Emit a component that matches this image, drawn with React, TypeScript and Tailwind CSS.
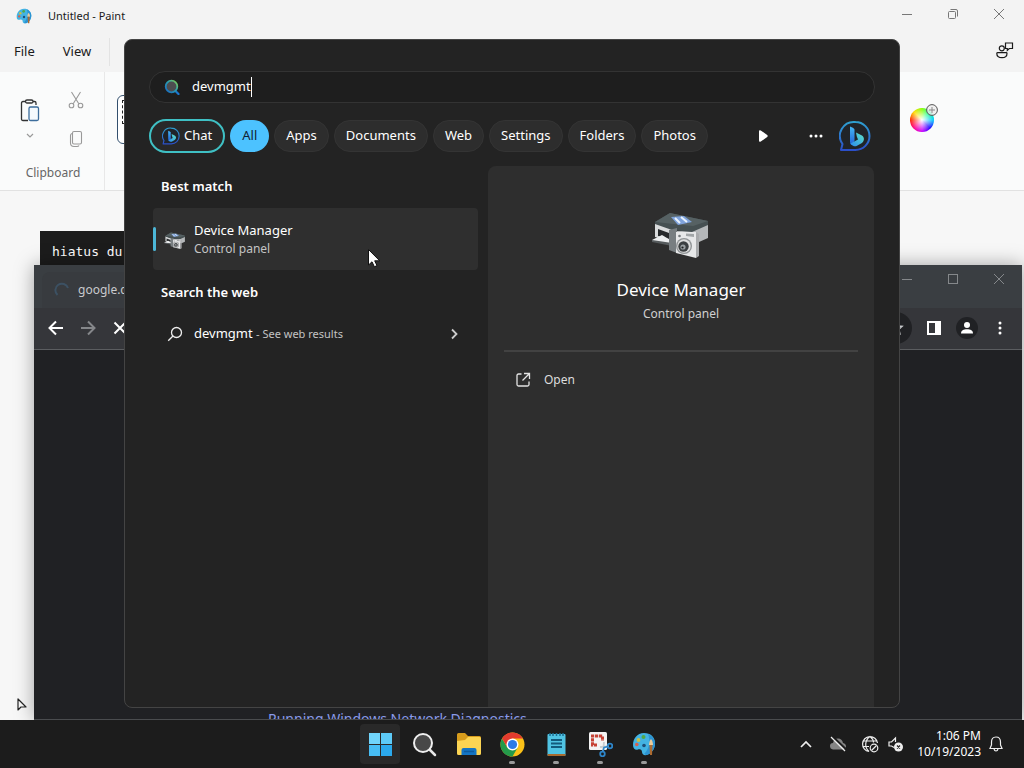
import { useState } from 'react';
import type { ReactNode } from 'react';

const FILTERS = ['Apps', 'Documents', 'Web', 'Settings', 'Folders', 'Photos'];

export default function App() {
  return (
    <div className="flex h-screen flex-col overflow-hidden bg-[#1c1c1c] font-['Noto_Sans',sans-serif]">
      <main className="relative min-h-0 flex-1 overflow-hidden">
        <PaintWindow />
        <div className="absolute top-[231px] left-10 h-10 w-96 bg-[#1c1c1c] px-3 pt-3 font-['DejaVu_Sans_Mono',monospace] text-[13px] leading-[18px] text-white">
          hiatus du
        </div>
        <BrowserWindow />
        <SearchPanel />
        <svg className="absolute top-[697px] left-4 h-4 w-3" viewBox="0 0 12 16" aria-hidden="true">
          <path d="M2 2v11l3-3h5z" fill="#f4f4f4" stroke="#222" strokeWidth="1.2" strokeLinejoin="round" />
        </svg>
        <svg className="absolute top-[248px] left-[367px] h-5 w-4" viewBox="0 0 16 20" aria-hidden="true">
          <path d="M1.500 1.500v15.500l3.500-3.200 2.400 5 2.600-1.200-2.300-4.800h5z" fill="#fff" stroke="#111" />
        </svg>
      </main>
      <Taskbar />
    </div>
  );
}

/* ── Paint ─────────────────────────────── */

function PaintWindow() {
  return (
    <section className="absolute inset-0 flex flex-col bg-[#f7f7f7] text-[#1a1a1a]">
      <header className="flex h-8 shrink-0 items-center bg-[#f3f3f3] pr-4 pl-4">
        <PaletteIcon className="h-4 w-4" />
        <h1 className="ml-4 text-[11px]">Untitled - Paint</h1>
        <div className="-mt-1 ml-auto flex items-center gap-7 text-[#777]">
          <WindowButton label="Minimize"><path d="M3 8.500h10" /></WindowButton>
          <WindowButton label="Restore">
            <rect x="3.500" y="5.500" width="7" height="7" rx="1" />
            <path d="M5.500 3.500H11q1.500 0 1.500 1.500v5.500" />
          </WindowButton>
          <WindowButton label="Close"><path d="M3 3l10 10M13 3L3 13" /></WindowButton>
        </div>
      </header>
      <nav className="flex h-10 shrink-0 items-center bg-[#f3f3f3] px-3 text-[13px]">
        <button type="button" className="px-0.5">File</button>
        <button type="button" className="ml-6 px-0.5">View</button>
        <span className="ml-4 h-7 w-px bg-[#e3e3e3]" />
        <button type="button" aria-label="Feedback" className="-mt-1 -mr-0.5 ml-auto">
          <svg className="h-[18px] w-[18px]" viewBox="0 0 18 18" fill="none" stroke="#1a1a1a" strokeWidth="1.200">
            <circle cx="5.800" cy="7.300" r="2.500" />
            <path d="M1.800 11.600h8.400q.8 0 .8.800c0 3-2 4.200-5 4.200s-5.200-1.200-5.200-4.200q0-.8 1-.8zM9.500 2h7v5.500h-3.200l-2 1.800V7.500H9.500z" />
          </svg>
        </button>
      </nav>
      <div className="flex h-[119px] shrink-0 border-b border-[#e2e2e2] bg-[#fafbfb]">
        <div className="flex w-[105px] flex-col items-center border-r border-[#e8e8e8] pt-4">
          <div className="flex h-[66px] gap-7">
            <button type="button" aria-label="Paste" className="flex flex-col items-center pt-2.5">
              <svg className="h-6 w-5" viewBox="0 0 20 24" fill="none" strokeWidth="1.300">
                <path d="M8 22.500H3Q1.500 22.500 1.500 21V5q0-1.500 1.500-1.500h2.500M13 3.500h1.500Q16 3.500 16 5v2" stroke="#333" />
                <rect x="5.500" y="2" width="7.500" height="3" rx="1.500" stroke="#333" />
                <rect x="9" y="9" width="9.500" height="13.500" rx="1.500" stroke="#3d6d9c" fill="#f4f9fd" />
              </svg>
              <svg className="mt-2.5 h-2 w-2" viewBox="0 0 8 8" fill="none" stroke="#999" strokeWidth="1.200"><path d="M1 2l3 3 3-3" /></svg>
            </button>
            <div className="flex flex-col items-center gap-5 pt-0.5">
              <button type="button" aria-label="Cut">
                <svg className="block h-5 w-4" viewBox="0 0 16 18" fill="none" stroke="#999" strokeWidth="1.100">
                  <path d="M3.500 1l7.300 11.800M12.500 1L5.200 12.800" />
                  <circle cx="3.500" cy="14.500" r="2.300" />
                  <circle cx="12.500" cy="14.500" r="2.300" />
                </svg>
              </button>
              <button type="button" aria-label="Copy">
                <svg className="block h-[18px] w-4" viewBox="0 0 16 18" fill="none" stroke="#999" strokeWidth="1.100">
                  <rect x="4.500" y="1.500" width="9" height="12.500" rx="1.500" />
                  <path d="M4 3.500Q2.500 4 2.500 5.500V13q0 3.500 3.500 3.500h3q1.500 0 2-1" />
                </svg>
              </button>
            </div>
          </div>
          <span className="mt-2.5 ml-0.5 text-[12px] text-[#666]">Clipboard</span>
        </div>
        <button type="button" aria-label="Select" className="mt-[23px] ml-3 flex h-[49px] w-12 items-start rounded-md border border-[#33506e] bg-white p-1">
          <span className="h-6 w-full border border-dashed border-[#222]" />
        </button>
        <button type="button" aria-label="Edit colors" className="mt-8 mr-[86px] ml-auto h-7 w-7">
          <span className="relative block h-7 w-7">
            <span className="absolute bottom-0 left-0 h-6 w-6 rounded-full bg-[radial-gradient(circle,white,transparent_70%),conic-gradient(#8f0,#0f8,#0cf,#20f,#c0f,#f08,#f20,#fd0,#8f0)]" />
            <svg className="absolute top-0 right-0 h-3 w-3" viewBox="0 0 12 12" fill="none" stroke="#555">
              <circle cx="6" cy="6" r="5.400" fill="#eee" fillOpacity=".8" />
              <path d="M6 3v6M3 6h6" stroke="#888" />
            </svg>
          </span>
        </button>
      </div>
    </section>
  );
}

function WindowButton({ label, children }: { label: string; children: ReactNode }) {
  return (
    <button type="button" aria-label={label} className="px-0.5">
      <svg className="block h-4 w-[14px]" viewBox="1 0 14 16" fill="none" stroke="currentColor">
        {children}
      </svg>
    </button>
  );
}

/* ── Browser ─────────────────────────────── */

function BrowserWindow() {
  return (
    <section className="absolute top-[265px] right-0.5 bottom-0 left-[34px] flex flex-col overflow-hidden bg-[#202124] shadow-[0_0_18px_rgba(0,0,0,0.35)]">
      <div className="flex h-[43px] shrink-0 items-end bg-[#3a3e42] pr-3.5 pl-2">
        <div className="flex h-9 w-60 items-center rounded-t-lg bg-[#383b3f] pl-3 text-[12px] text-[#c8cacd]">
          <svg className="mr-2 h-4 w-4" viewBox="0 0 16 16" fill="none" stroke="#3c5163" strokeWidth="2">
            <path d="M3.500 13A6.500 6.500 0 1 1 14 6" />
          </svg>
          google.ca
        </div>
        <div className="mb-[21px] ml-auto flex gap-7 text-[#85888b]">
          <WindowButton label="Minimize browser"><path d="M3 8.500h10" /></WindowButton>
          <WindowButton label="Maximize browser"><rect x="3.500" y="3.500" width="9" height="9" /></WindowButton>
          <WindowButton label="Close browser"><path d="M3 3l10 10M13 3L3 13" /></WindowButton>
        </div>
      </div>
      <div className="flex h-[42px] shrink-0 items-center border-b border-[#5b5d60] bg-[#35363a] pr-3.5 pb-px pl-3">
        <div className="flex gap-3">
          <NavButton label="Back" className="text-white"><path d="M17 10H4M10 3.500L3.500 10l6.500 6.500" /></NavButton>
          <NavButton label="Forward" className="text-[#85878a]"><path d="M3 10h13M10 3.500l6.500 6.500-6.500 6.500" /></NavButton>
          <NavButton label="Stop" className="text-white"><path d="M4.500 4.500l11 11M15.500 4.500l-11 11" /></NavButton>
        </div>
        <div className="ml-6 flex h-8 flex-1 items-center justify-end rounded-full bg-[#202124] pr-2">
          <svg className="h-4 w-4" viewBox="0 0 16 16" fill="none" stroke="#c8cacd" strokeWidth="1.500"><path d="M8 2l1.800 4 4.200.4-3.200 2.800 1 4.300L8 11.200l-3.800 2.300 1-4.300L2 6.400 6.200 6z" /></svg>
        </div>
        <button type="button" aria-label="Side panel" className="ml-3.5">
          <svg className="block h-4 w-4" viewBox="0 0 16 16"><path fill="#fff" fillRule="evenodd" d="M1 1h14v14H1zM3 3v10h6V3z" /></svg>
        </button>
        <button type="button" aria-label="Profile" className="ml-3.5 flex h-[22px] w-[22px] items-center justify-center rounded-full bg-[#202124]">
          <svg className="h-3.5 w-3.5" viewBox="0 0 14 14" fill="#fff"><circle cx="7" cy="4" r="3" /><path d="M1 12.500c0-3 2.500-4.200 6-4.200s6 1.200 6 4.200z" /></svg>
        </button>
        <button type="button" aria-label="Browser menu" className="ml-3.5">
          <svg className="block h-4 w-4" viewBox="0 0 16 16" fill="#fff"><circle cx="8" cy="3" r="1.500" /><circle cx="8" cy="8" r="1.500" /><circle cx="8" cy="13" r="1.500" /></svg>
        </button>
      </div>
      <div className="flex min-h-0 flex-1 flex-col justify-end overflow-hidden border-b border-[#4a4c4f] pl-[234px]">
        <div className="h-2.5">
          <a href="#diagnostics" className="block text-[14px] leading-5 text-[#8a9bea]">Running Windows Network Diagnostics</a>
        </div>
      </div>
    </section>
  );
}

function NavButton({ label, className, children }: { label: string; className: string; children: ReactNode }) {
  return (
    <button type="button" aria-label={label} className={className}>
      <svg className="block h-5 w-5" viewBox="0 0 20 20" fill="none" stroke="currentColor" strokeWidth="2">
        {children}
      </svg>
    </button>
  );
}

/* ── Search panel ─────────────────────────────── */

function SearchPanel() {
  const [query, setQuery] = useState('devmgmt');

  return (
    <section className="absolute inset-x-[124px] top-[39px] bottom-3 flex flex-col rounded-lg border border-[#444] bg-[#232323] pt-[31px] text-white">
      <label className="mx-6 flex h-8 shrink-0 items-center rounded-full border border-[#333] bg-[#1e1e1e] pl-3.5">
        <svg className="mr-3 h-4 w-4" viewBox="0 0 16 16" fill="none" aria-hidden="true">
          <defs>
            <linearGradient id="lens" x1="1" y1="0" x2="0" y2="1">
              <stop offset="0" stopColor="#8bcf4a" />
              <stop offset=".45" stopColor="#2a9fb0" />
              <stop offset="1" stopColor="#1668c4" />
            </linearGradient>
          </defs>
          <path d="M11.500 12l3 3" stroke="#1b78cf" strokeWidth="2.200" strokeLinecap="round" />
          <circle cx="7.500" cy="7.500" r="5.800" fill="#4d4d50" stroke="url(#lens)" strokeWidth="1.800" />
        </svg>
        <input
          aria-label="Search"
          value={query}
          onChange={(e) => setQuery(e.target.value)}
          className="field-sizing-content bg-transparent text-[13px] outline-none"
        />
        <span className="h-5 w-px bg-white" />
      </label>

      <div className="mx-6 mt-4 flex h-[34px] shrink-0 items-center gap-[5px] text-[13px]">
        <button type="button" className="flex h-[34px] items-center gap-1 rounded-full border-2 border-[#3fc0c4] bg-[#282828] px-[11px]">
          <BingIcon className="h-[18px] w-[18px]" />
          Chat
        </button>
        <button type="button" className="h-8 rounded-full bg-[#4cc2ff] px-3 text-[#123]">All</button>
        {FILTERS.map((name) => (
          <button key={name} type="button" className="h-8 rounded-full border border-[#343434] bg-[#2d2d2d] px-[11px]">
            {name}
          </button>
        ))}
        <button type="button" aria-label="More filters" className="ml-auto">
          <svg className="block h-4 w-4" viewBox="0 0 16 16" fill="#fff"><path d="M4 3.500q0-2 1.800-1l6.400 4.600q1 .9 0 1.800l-6.400 4.600q-1.800 1-1.800-1z" /></svg>
        </button>
        <button type="button" aria-label="Options" className="ml-8">
          <svg className="block h-4 w-4" viewBox="0 0 16 16" fill="#fff"><circle cx="3" cy="8" r="1.500" /><circle cx="8" cy="8" r="1.500" /><circle cx="13" cy="8" r="1.500" /></svg>
        </button>
        <button type="button" aria-label="Bing" className="mr-1 ml-2.5">
          <BingIcon className="block h-8 w-8" />
        </button>
      </div>

      <div className="mt-[13px] flex min-h-0 flex-1 gap-2.5 pr-[25px] pl-7">
        <div className="w-[325px] shrink-0 pt-2.5">
          <h2 className="px-2 text-[13px] leading-5 font-semibold">Best match</h2>
          <button type="button" className="mt-3 flex h-[62px] w-full items-center rounded bg-[#2f2f2f] text-left">
            <span className="h-6 w-[3px] rounded-full bg-[#4cb7d8]" />
            <DeviceIcon className="mt-1 mr-2 ml-2 h-[22px] w-[22px]" />
            <span>
              <span className="block text-[13px] leading-5">Device Manager</span>
              <span className="block text-[12px] leading-[18px] text-[#c4c4c4]">Control panel</span>
            </span>
          </button>
          <h2 className="mt-3 px-2 text-[13px] leading-5 font-semibold">Search the web</h2>
          <button type="button" className="mt-3 flex h-10 w-full items-center pr-4 pl-3.5 text-left">
            <svg className="mr-[11px] h-4 w-4" viewBox="0 0 16 16" fill="none" stroke="#eee" strokeWidth="1.300"><circle cx="9.500" cy="6.500" r="5" /><path d="M6 10l-4.800 4.800" /></svg>
            <span className="text-[13px]">devmgmt <span className="text-[11px] text-[#c4c4c4]">- See web results</span></span>
            <svg className="ml-auto h-4 w-4" viewBox="0 0 16 16" fill="none" stroke="#ccc" strokeWidth="1.800"><path d="M6 3.500L10.500 8 6 12.500" /></svg>
          </button>
        </div>

        <div className="flex min-w-0 flex-1 flex-col rounded-t-lg bg-[#2e2e2e] px-4 pt-10">
          <div className="flex flex-col items-center">
            <DeviceIcon className="h-[60px] w-[60px]" />
            <h3 className="mt-3 text-[17px] leading-6">Device Manager</h3>
            <p className="mt-0.5 text-[12px] leading-5 text-[#d0d0d0]">Control panel</p>
          </div>
          <hr className="mt-[26px] border-t-2 border-[#424242]" />
          <button type="button" className="mt-2 flex h-10 items-center gap-3 px-2.5 text-[12px] text-[#ddd]">
            <svg className="h-[18px] w-[18px]" viewBox="0 0 18 18" fill="none" stroke="#e4e4e4" strokeWidth="1.300">
              <path d="M7.500 3H4.500Q3 3 3 4.500v9Q3 15 4.500 15h9q1.500 0 1.500-1.500v-3M10 2.500h5.500V8M15.500 2.500L8.500 9.500" />
            </svg>
            Open
          </button>
        </div>
      </div>
    </section>
  );
}

function BingIcon({ className }: { className: string }) {
  return (
    <svg className={className} viewBox="0 0 32 32" fill="none" aria-hidden="true">
      <defs>
        <linearGradient id="bingRing" x1="0" y1="0" x2="0" y2="1">
          <stop offset="0" stopColor="#2e9fd0" />
          <stop offset="1" stopColor="#2b4fc9" />
        </linearGradient>
        <linearGradient id="bingStem" x1="0" y1="0" x2="0" y2="1">
          <stop offset="0" stopColor="#45b8f5" />
          <stop offset="1" stopColor="#2160d8" />
        </linearGradient>
        <linearGradient id="bingBowl" x1="0" y1="1" x2="1" y2="0">
          <stop offset="0" stopColor="#2b8cf0" />
          <stop offset="1" stopColor="#5fe3c5" />
        </linearGradient>
      </defs>
      <path d="M16.500 2a14 14 0 1 1 0 28H2l1.500-6A14 14 0 0 1 16.500 2z" stroke="url(#bingRing)" strokeWidth="2" strokeLinejoin="round" fill="#202429" />
      <path d="M11 6.500l2.800 1.300q1.700.8 1.700 2V21l-3 4Q11 24 11 21.500z" fill="url(#bingStem)" />
      <path d="M17 12.500l5.500 2.700c3.500 2 3 6 0 8l-4.500 2.500q-2 1-4 0-2-.8-2.500-2.200L19 19.500l-1.200-3z" fill="url(#bingBowl)" />
    </svg>
  );
}

// Printer with a camera in front of it
function DeviceIcon({ className }: { className: string }) {
  return (
    <svg className={className} viewBox="0 0 60 60" aria-hidden="true">
      <path d="M24 25l16 0 17-7v14l-9 4-24-3z" fill="#b4b7b9" />
      <path d="M4 17l17 6v13L4 31z" fill="#d9dbdc" />
      <path d="M7 23l11 4v6L7 30z" fill="#26292b" />
      <path d="M1 34l10-5 10 6v3L1 35z" fill="#eceeef" />
      <path d="M1 34l20 3v3L1 36z" fill="#565b5d" />
      <path d="M4 16L19 7l38 8v4l-16 7-20-2L4 18z" fill="#465052" />
      <path d="M19 7l38 8-15 5L4 16z" fill="#566163" />
      <path d="M20 11l13-1 8 6-14 3z" fill="#7fa3dc" />
      <path d="M24 12l5 5M30 11l6 5" stroke="#e8f3ff" strokeWidth="2" />
      <path d="M18 24l8-2v25l-8-3z" fill="#787e81" />
      <path d="M25 26l20 0v26l-20-5z" fill="#e7e8e9" />
      <path d="M45 26l3 2v22l-3 2z" fill="#a9abad" />
      <path d="M35 27.500l8 .5v3l-8-1z" fill="#a2a6a8" />
      <circle cx="28.500" cy="30" r="1.300" fill="#74797b" />
      <circle cx="33" cy="40" r="8" fill="#8f9395" />
      <circle cx="33" cy="40" r="6.700" fill="#ddd" />
      <circle cx="32.500" cy="40.500" r="5.200" fill="#3b3f41" />
      <circle cx="32" cy="41" r="2.600" fill="#999ea1" />
      <circle cx="31.500" cy="41.500" r="1.100" fill="#1d1f20" />
    </svg>
  );
}

/* ── Taskbar ─────────────────────────────── */

function Taskbar() {
  return (
    <footer className="grid h-12 shrink-0 grid-cols-[1fr_auto_1fr] items-center bg-[#1c1c1c] text-white">
      <span />
      <div className="flex gap-1">
        <TaskButton label="Start" active>
          <rect x="1" y="1" width="11" height="11" fill="#70d4fb" />
          <rect x="13" y="1" width="11" height="11" fill="#5dcbf8" />
          <rect x="1" y="13" width="11" height="11" fill="#47bdf4" />
          <rect x="13" y="13" width="11" height="11" fill="#2ba9ec" />
        </TaskButton>
        <TaskButton label="Search">
          <path d="M17 17l6 6" stroke="#e8e8e8" strokeWidth="2.500" strokeLinecap="round" />
          <circle cx="11" cy="11" r="9" fill="#484848" stroke="#eee" strokeWidth="2" />
        </TaskButton>
        <TaskButton label="File Explorer">
          <path d="M1 2.500Q1 1 2.500 1H9l3 3h11.500Q25 4 25 5.500V12H1z" fill="#d79c1c" />
          <path d="M1 9l8-1 3-3h11.500Q25 5 25 6.500v15q0 1.500-1.500 1.500h-21Q1 23 1 21.500z" fill="#fbd453" />
          <path d="M5.500 23v-5q0-2 2-2h11q2 0 2 2v5z" fill="#1475c4" />
          <path d="M8 19.500h10" stroke="#0e5b9e" strokeWidth="1.500" />
        </TaskButton>
        <TaskButton label="Chrome" running>
          <circle cx="12.500" cy="12.500" r="12" fill="#fbc118" />
          <path d="M2.100 6.500A12 12 0 0 0 12.500 24.500l5.200-9-10.400 0z" fill="#249a4a" />
          <path d="M2.100 6.500A12 12 0 0 1 22.900 6.500H12.500L7.500 15.500z" fill="#e33b2e" />
          <circle cx="12.500" cy="12.500" r="6" fill="#fff" />
          <circle cx="12.500" cy="12.500" r="4.600" fill="#2d7be8" />
        </TaskButton>
        <TaskButton label="Notepad" running>
          <rect x="3.500" y="2" width="18" height="22" rx="1" fill="#50c4e4" />
          <path d="M3.500 22h18v1q0 1-1 1h-16q-1 0-1-1z" fill="#a86b30" />
          <path d="M6 1v3M9 1v3M12.500 1v3M16 1v3M19 1v3" stroke="#1c6f93" strokeWidth="1.500" />
          <path d="M7 8h11M7 11.500h11M7 15h11" stroke="#135b7d" strokeWidth="1.800" />
        </TaskButton>
        <TaskButton label="Snipping Tool" running>
          <rect x="1" y="0" width="18" height="18" rx="1.500" fill="#f3f3f3" />
          <path d="M9 13H4.500V4h10v5" fill="none" stroke="#c64235" strokeWidth="3" strokeDasharray="3.200 .8" />
          <path d="M16 10l-1 9M12 15l9-.5" stroke="#c8cdd0" strokeWidth="1.800" />
          <circle cx="22" cy="14" r="2.300" fill="none" stroke="#2e86ca" strokeWidth="1.800" />
          <circle cx="14.500" cy="22" r="2.300" fill="none" stroke="#2e86ca" strokeWidth="1.800" />
          <path d="M15 19.500l1-4 4-1" fill="none" stroke="#2e86ca" strokeWidth="1.600" />
        </TaskButton>
        <button type="button" aria-label="Paint" className="relative flex h-10 w-10 items-center justify-center">
          <PaletteIcon className="h-6 w-6" />
          <span className="absolute bottom-0 h-[3px] w-1.5 rounded-full bg-[#9a9a9a]" />
        </button>
      </div>
      <div className="flex items-center justify-end pr-[19px]">
        <TrayButton label="Show hidden icons"><path d="M4 12l5-5 5 5" strokeWidth="1.700" /></TrayButton>
        <TrayButton label="OneDrive offline" className="ml-3.5">
          <path d="M4 14.500q-3-.5-3-3.500t3-3q1-4.500 5-4.500t5 4.500q3 .500 3 3.500t-3 3z" fill="#858585" stroke="none" />
          <path d="M3 1l15 14" stroke="#1c1c1c" strokeWidth="2" />
          <path d="M2 2l14 14" strokeWidth="1.300" />
        </TrayButton>
        <TrayButton label="Network unavailable" className="ml-3.5">
          <path d="M8 16.500A7.500 7.500 0 1 1 16.500 8M8 16.500C3 12 4 5 9 1.500c2.500 2 3.500 4 3.500 6M2 6h14M2 11.500h6" />
          <circle cx="13" cy="13" r="3.800" />
          <path d="M10.500 15.500l5-5" />
        </TrayButton>
        <TrayButton label="Muted" className="ml-2">
          <path d="M7 12.500L4.500 11H2V7h2.500L8.500 3v4" />
          <circle cx="11.500" cy="12" r="4.500" fill="#eee" stroke="none" />
          <path d="M10 10.500l3 3M13 10.500l-3 3" stroke="#222" />
        </TrayButton>
        <time dateTime="2023-10-19T13:06" className="ml-3 text-right text-[12px] leading-4 whitespace-nowrap">
          1:06 PM<br />10/19/2023
        </time>
        <TrayButton label="Notifications" className="ml-1.5">
          <path d="M9 2C6 2 4.500 4 4.500 7v3L3 13.500h12L13.500 10V7C13.500 4 12 2 9 2zM7 14q.5 2 2 2t2-2" />
        </TrayButton>
      </div>
    </footer>
  );
}

function TaskButton({
  label,
  active = false,
  running = false,
  children,
}: {
  label: string;
  active?: boolean;
  running?: boolean;
  children: ReactNode;
}) {
  return (
    <button
      type="button"
      aria-label={label}
      className={`relative flex h-10 w-10 items-center justify-center rounded ${active ? 'bg-[#292929]' : ''}`}
    >
      <svg className="h-[25px] w-[25px]" viewBox="0 0 25 25">
        {children}
      </svg>
      {running && <span className="absolute bottom-0 h-[3px] w-1.5 rounded-full bg-[#9a9a9a]" />}
    </button>
  );
}

function TrayButton({ label, className = '', children }: { label: string; className?: string; children: ReactNode }) {
  return (
    <button type="button" aria-label={label} className={className}>
      <svg className="block h-[18px] w-[18px]" viewBox="0 0 18 18" fill="none" stroke="#eee" strokeWidth="1.200">
        {children}
      </svg>
    </button>
  );
}

function PaletteIcon({ className }: { className: string }) {
  return (
    <svg className={className} viewBox="0 0 24 24" aria-hidden="true">
      <path d="M12 1C5 1 1 7 1 13c0 4 2.500 5.500 5 4.500 2.500-.8 4 .5 4 2.500 0 3 3 4 6 2.500 4-2 7-6 7-11C23 5 18.500 1 12 1z" fill="#43b3e3" />
      <path d="M16 2c4 1.500 7 5 7 9.500 0 5-3 9-7 11-2 1-3.500 0-3.500-1C17 17 19 9 16 2z" fill="#2c93d2" />
      <circle cx="11.500" cy="5" r="2" fill="#53a847" />
      <circle cx="6.500" cy="8" r="1.900" fill="#c9bf45" />
      <circle cx="4.800" cy="12.500" r="1.800" fill="#d5614d" />
      <circle cx="12" cy="13.500" r="1.800" fill="#1d4e77" />
      <path d="M17 12q0-3 2-5 2 2 2 5v1h-4z" fill="#eacb9b" />
      <path d="M17.500 13h3l-.5 10h-2z" fill="#ab6a31" />
    </svg>
  );
}
